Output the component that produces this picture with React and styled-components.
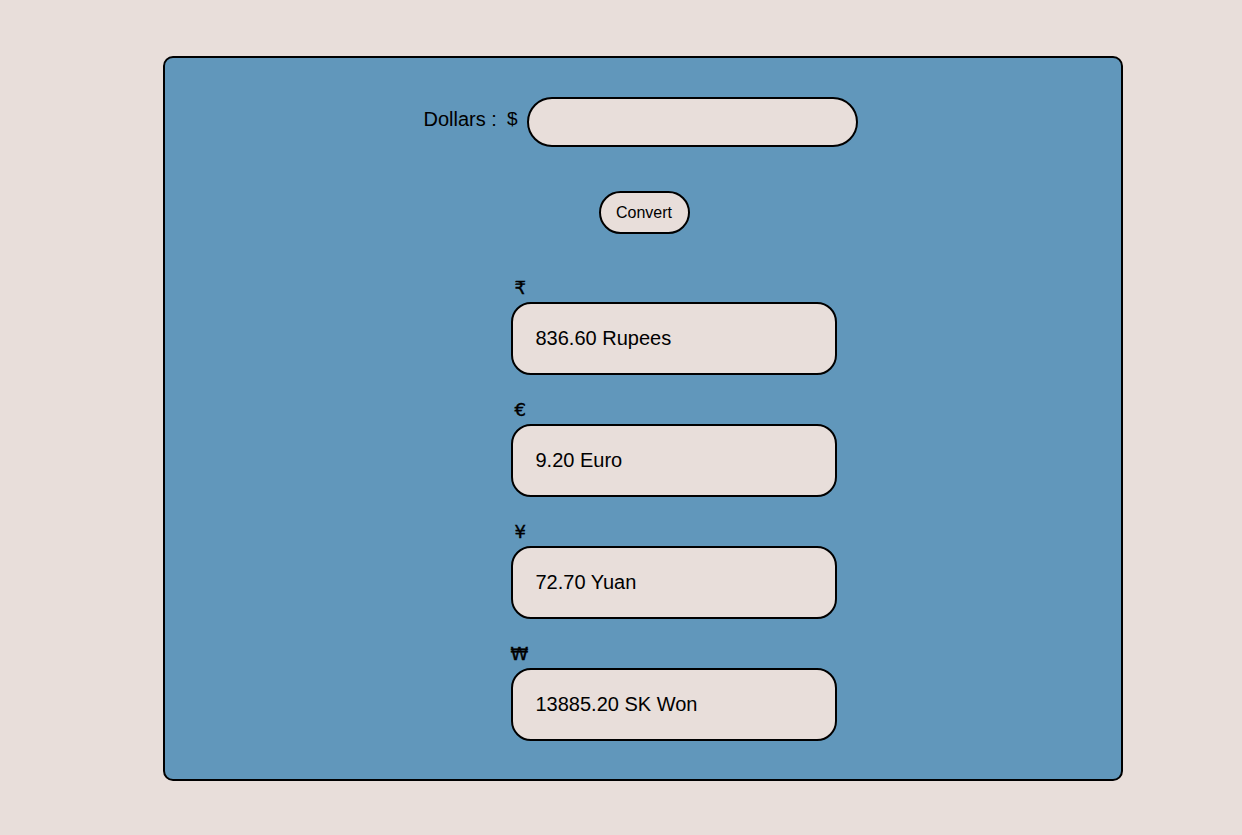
import styled, { createGlobalStyle } from 'styled-components'

const Global = createGlobalStyle`
    body {
        margin: 0;
        background: #e8deda;
        font-family: "Liberation Sans", Arial, sans-serif;
    }
`;

const Page = styled.div`
    padding: 56px 0 0 163px;
`;

const Card = styled.div`
    box-sizing: border-box;
    width: 960px;
    height: 725px;
    background: #6197bb;
    border: 2px solid #000;
    border-radius: 10px;
    display: flex;
    flex-direction: column;
    align-items: center;
    padding-top: 39px;
`;

const Row = styled.div`
    display: flex;
    align-items: center;
    gap: 10px;
    margin-right: 4px;
`;

const Label = styled.span`
    font-size: ${p => p.$size || 20}px;
    color: #000;
    margin-top: -6px;
`;

const Input = styled.input`
    box-sizing: border-box;
    width: 331px;
    height: 50px;
    border: 2px solid #000;
    border-radius: 25px;
    background: #e8deda;
    outline: none;
    font-size: 18px;
    padding: 0 18px;
`;

const Button = styled.button`
    box-sizing: border-box;
    margin: 44px 0 0 2px;
    width: 91px;
    height: 43px;
    border: 2px solid #000;
    border-radius: 22px;
    background: #e8deda;
    font-family: "Liberation Sans", Arial, sans-serif;
    font-size: 16px;
    color: #000;
    cursor: pointer;
`;

const Results = styled.div`
    margin: 44px 0 0 61px;
    display: flex;
    flex-direction: column;
    gap: 25px;
`;

const Group = styled.div`
    display: flex;
    flex-direction: column;
    gap: 4px;
`;

const Symbol = styled.span`
    height: 20px;
    line-height: 20px;
    font-family: "DejaVu Sans", sans-serif;
    font-size: 18px;
    -webkit-text-stroke: 0.4px #000;
    padding-left: ${p => p.$inset ?? 4}px;
    color: #000;
`;

const Output = styled.div`
    box-sizing: border-box;
    width: 326px;
    height: 73px;
    border: 2px solid #000;
    border-radius: 20px;
    background: #e8deda;
    display: flex;
    align-items: center;
    padding-left: 23px;
    font-size: 20px;
    color: #000;
`;

const rates = [
    { sym: '₹', text: '836.60 Rupees' },
    { sym: '€', text: '9.20 Euro' },
    { sym: '¥', text: '72.70 Yuan' },
    { sym: '₩', text: '13885.20 SK Won', inset: 0 },
];

const App = () => {
  return (
      <>
        <Global />
        <Page>
            <Card>
                <Row>
                    <Label>Dollars :</Label>
                    <Label $size={19}>$</Label>
                    <Input type="text" />
                </Row>
                <Button>Convert</Button>
                <Results>
                    {rates.map(r => (
                        <Group key={r.text}>
                            <Symbol $inset={r.inset}>{r.sym}</Symbol>
                            <Output>{r.text}</Output>
                        </Group>
                    ))}
                </Results>
            </Card>
        </Page>
      </>
  );
};

export default App;
